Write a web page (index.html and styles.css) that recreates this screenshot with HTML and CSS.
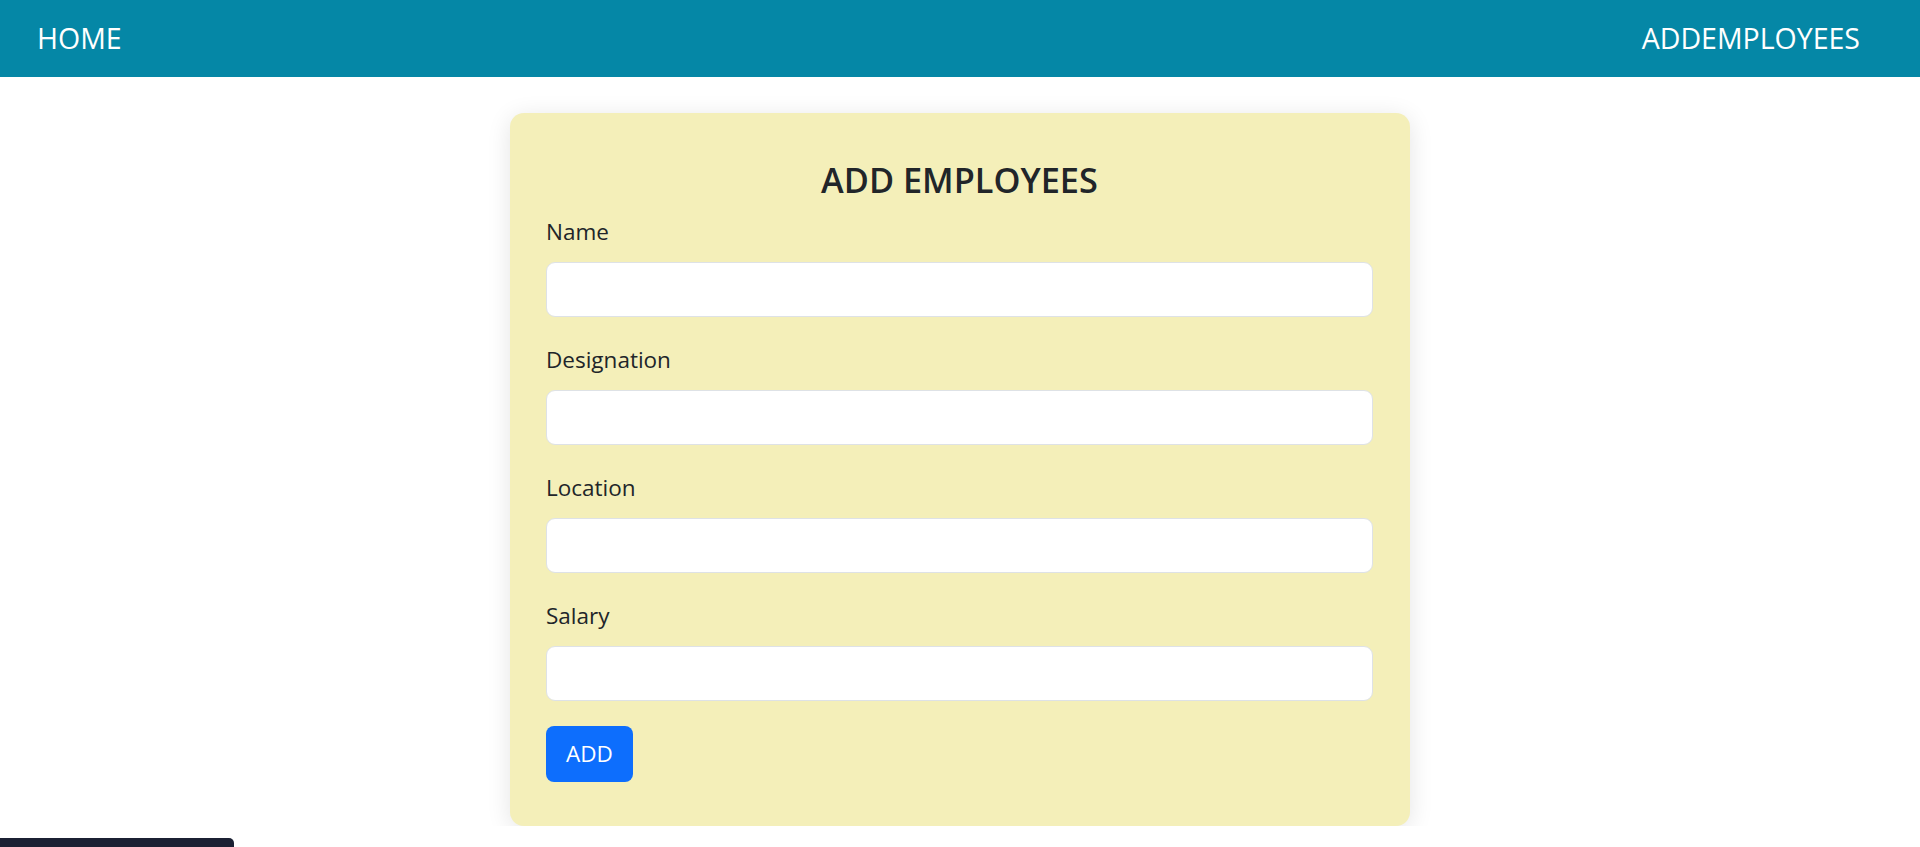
FILE: index.html
```html
<!DOCTYPE html>
<html lang="en">
<head>
<meta charset="utf-8">
<title>Add Employees</title>
<link rel="stylesheet" href="styles.css">
</head>
<body>
<nav class="navbar">
  <a class="nav-link" href="#">HOME</a>
  <a class="nav-link" href="#">ADDEMPLOYEES</a>
</nav>
<main class="page">
  <form class="card">
    <h2 class="card-title">ADD EMPLOYEES</h2>
    <div class="group">
      <label class="label" for="name">Name</label>
      <input class="input" id="name" type="text">
    </div>
    <div class="group">
      <label class="label" for="designation">Designation</label>
      <input class="input" id="designation" type="text">
    </div>
    <div class="group">
      <label class="label" for="location">Location</label>
      <input class="input" id="location" type="text">
    </div>
    <div class="group">
      <label class="label" for="salary">Salary</label>
      <input class="input" id="salary" type="text">
    </div>
    <button class="btn" type="button">ADD</button>
  </form>
</main>
<div class="corner-bar"></div>
</body>
</html>
```

FILE: styles.css
```css
* { box-sizing: border-box; }

html, body {
  margin: 0;
  padding: 0;
  background: #ffffff;
  font-family: "Open Sans", "Noto Sans", sans-serif;
  color: #212529;
  overflow: hidden;
}

.navbar {
  height: 77px;
  background: #0587a6;
  display: flex;
  align-items: center;
  justify-content: space-between;
  padding: 0 60px 0 37px;
}

.nav-link {
  color: #ffffff;
  text-decoration: none;
  font-size: 28.5px;
  line-height: 36px;
  font-weight: 400;
  padding-bottom: 2px;
}

.page {
  padding-top: 36px;
}

.card {
  width: 900px;
  margin: 0 auto;
  background: #f4efb9;
  border-radius: 14px;
  box-shadow: 0 4px 24px rgba(0, 0, 0, 0.11);
  padding: 46px 37px 44px 36px;
  display: flex;
  flex-direction: column;
}

.card-title {
  margin: 0 0 14px;
  text-align: center;
  font-size: 34.3px;
  line-height: 41px;
  font-weight: 600;
  color: #212529;
}

.group {
  display: flex;
  flex-direction: column;
  margin-bottom: 25px;
}

.label {
  font-size: 22.5px;
  line-height: 36px;
  margin-bottom: 12px;
  color: #212529;
}

.input {
  height: 55px;
  width: 100%;
  border: 1px solid #dee2e6;
  border-radius: 9px;
  background: #ffffff;
  font-size: 22px;
  padding: 0 18px;
  outline: none;
}

.btn {
  align-self: flex-start;
  width: 87px;
  height: 56px;
  border: none;
  border-radius: 8px;
  background: #0d6efd;
  color: #ffffff;
  font-family: "Open Sans", "Noto Sans", sans-serif;
  font-size: 22.5px;
  line-height: 36px;
  padding: 0;
}

.corner-bar {
  position: fixed;
  left: 0;
  bottom: 0;
  width: 234px;
  height: 9px;
  background: #1b2033;
  border-top-right-radius: 5px;
}
```
